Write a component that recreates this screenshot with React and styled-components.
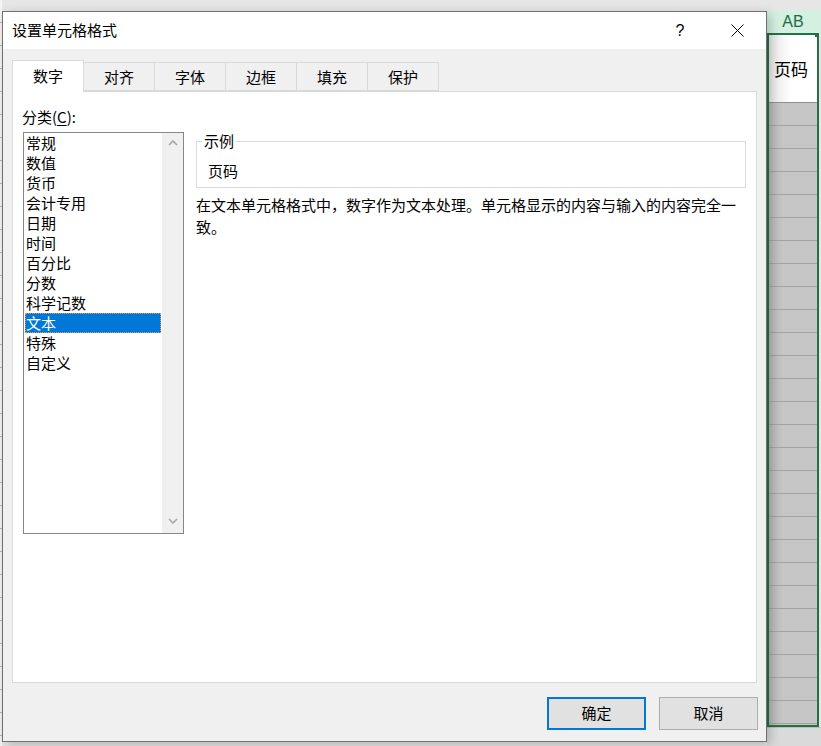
import React from 'react';
import styled, { createGlobalStyle } from 'styled-components';

const GlobalStyle = createGlobalStyle`
  html, body {
    margin: 0;
    padding: 0;
    background: #e6e6e6;
  }
  body {
    font-family: "Noto Sans CJK SC", "Noto Sans", sans-serif;
    color: #000;
  }
`;

const categories = [
  '常规', '数值', '货币', '会计专用', '日期', '时间',
  '百分比', '分数', '科学记数', '文本', '特殊', '自定义'
];

const tabs = ['数字', '对齐', '字体', '边框', '填充', '保护'];

// Page behind the dialog
const Screen = styled.div`
  display: flex;
  width: 821px;
  height: 746px;
  overflow: hidden;
  background: #e6e6e6;
`;

const LeftStrip = styled.div`
  width: 2px;
  flex: none;
  background: repeating-linear-gradient(to bottom, #f4f4f4 0 22px, #b8b8b8 22px 23px);
`;

// Dialog window
const Dialog = styled.div`
  position: relative;
  z-index: 1;
  flex: none;
  width: 765px;
  height: 731px;
  margin-top: 11px;
  box-sizing: border-box;
  border: 1px solid #707070;
  background: #f0f0f0;
  box-shadow: 3px 3px 10px rgba(0, 0, 0, 0.22);
  display: flex;
  flex-direction: column;
`;

const TitleBar = styled.div`
  height: 37px;
  flex: none;
  background: #fff;
  display: flex;
  align-items: center;
  padding-left: 9px;
  font-size: 15px;
`;

const Title = styled.div`
  flex: 1;
  padding-bottom: 2px;
`;

const TitleButton = styled.div`
  width: ${p => p.$w}px;
  height: 37px;
  display: flex;
  align-items: center;
  justify-content: center;
  font-family: "Liberation Sans", Arial, sans-serif;
  font-size: 16px;
`;

const Body = styled.div`
  flex: 1;
  display: flex;
  flex-direction: column;
  padding: 11px 8px 0 9px;
`;

const TabRow = styled.div`
  display: flex;
  align-items: flex-end;
  height: 31px;
`;

const Tab = styled.div`
  position: relative;
  box-sizing: border-box;
  width: 72px;
  height: ${p => (p.$active ? 32 : 29)}px;
  margin-right: -1px;
  margin-bottom: ${p => (p.$active ? -1 : 0)}px;
  z-index: ${p => (p.$active ? 2 : 0)};
  border: 1px solid #d9d9d9;
  border-bottom: ${p => (p.$active ? 'none' : '1px solid #d9d9d9')};
  background: ${p => (p.$active ? '#fff' : '#f0f0f0')};
  display: flex;
  align-items: center;
  justify-content: center;
  font-size: 15px;
  padding-bottom: ${p => (p.$active ? 3 : 1)}px;
`;

const Panel = styled.div`
  box-sizing: border-box;
  width: 745px;
  height: 592px;
  border: 1px solid #d9d9d9;
  background: #fff;
  display: flex;
  gap: 12px;
  padding: 15px 10px 0 10px;
`;

const LeftCol = styled.div`
  width: 161px;
  display: flex;
  flex-direction: column;
`;

const Label = styled.div`
  height: 20px;
  line-height: 20px;
  font-size: 15px;
  margin-bottom: 5px;
  margin-left: -1px;

  u {
    text-decoration-thickness: 1px;
    text-underline-offset: 2px;
  }
`;

const ListBox = styled.div`
  box-sizing: border-box;
  width: 161px;
  height: 402px;
  border: 1px solid #828790;
  display: flex;
`;

const Items = styled.div`
  flex: 1;
  padding: 0 1px;
`;

const Item = styled.div`
  box-sizing: border-box;
  height: 20px;
  line-height: 18px;
  font-size: 15px;
  padding-left: 0;
  border: 1px dotted ${p => (p.$selected ? '#e8a050' : 'transparent')};
  background: ${p => (p.$selected ? '#0078d7' : 'transparent')};
  color: ${p => (p.$selected ? '#fff' : '#000')};
  white-space: nowrap;
`;

const ScrollBar = styled.div`
  width: 21px;
  background: #f0f0f0;
  display: flex;
  flex-direction: column;
  justify-content: space-between;
  align-items: center;
  padding: 7px 0 9px;
`;

const RightCol = styled.div`
  width: 550px;
  padding-top: 24px;
`;

const Group = styled.fieldset`
  margin: 0;
  padding: 0;
  border: 1px solid #dcdcdc;
  min-width: 0;
`;

const Legend = styled.legend`
  font-size: 15px;
  line-height: 20px;
  padding: 0 2px;
  margin-left: 5px;
`;

const Sample = styled.div`
  font-size: 15px;
  line-height: 20px;
  padding: 10px 0 6px 11px;
`;

const Description = styled.p`
  margin: 6px 0 0;
  font-size: 15px;
  line-height: 22px;
`;

const Footer = styled.div`
  display: flex;
  justify-content: flex-end;
  gap: 13px;
  padding-top: 14px;
`;

const Button = styled.button`
  box-sizing: border-box;
  width: 99px;
  height: 33px;
  margin: 0;
  background: #e1e1e1;
  border: ${p => (p.$primary ? '2px solid #0078d7' : '1px solid #adadad')};
  font-family: "Noto Sans CJK SC", sans-serif;
  font-size: 15px;
  color: #000;
  padding: 0 0 2px;
`;

// Spreadsheet column visible beside the dialog
const SheetCol = styled.div`
  flex: 1;
  display: flex;
  flex-direction: column;
  padding-top: 10px;
`;

const ColHeader = styled.div`
  height: 23px;
  flex: none;
  background: #d3f0e0;
  color: #1d6b45;
  font-family: "Liberation Sans", Arial, sans-serif;
  font-size: 16px;
  display: flex;
  align-items: center;
  justify-content: center;
  padding-right: 2px;
`;

const Selection = styled.div`
  position: relative;
  width: 52px;
  height: 694px;
  box-sizing: border-box;
  border: 2px solid #217346;
  display: flex;
  flex-direction: column;
  overflow: hidden;
`;

const FillHandle = styled.div`
  position: absolute;
  top: -3px;
  right: -3px;
  width: 4px;
  height: 4px;
  background: #217346;
  border: 1px solid #fff;
`;

const ActiveCell = styled.div`
  height: 68px;
  flex: none;
  box-sizing: border-box;
  border-bottom: 1px solid #8e8e8e;
  background: linear-gradient(to right, #e4e4e4, #ffffff 22px);
  display: flex;
  align-items: center;
  padding-left: 5px;
  font-size: 17px;
  padding-bottom: 1px;
`;

const GreyRow = styled.div`
  height: 23px;
  flex: none;
  box-sizing: border-box;
  border-bottom: 1px solid #a2a2a2;
  background: linear-gradient(to right, #b4b4b4, #c6c6c6 14px);
`;

const SheetBottom = styled.div`
  flex: 1;
  background: #dadada;
  border-top: 1px solid #bdbdbd;
`;

const Chevron = ({ up }) => (
  <svg width="10" height="6" viewBox="0 0 10 6">
    <path
      d={up ? 'M1 5 L5 1 L9 5' : 'M1 1 L5 5 L9 1'}
      fill="none"
      stroke="#a6a6a6"
      strokeWidth="1.6"
    />
  </svg>
);

const CloseIcon = () => (
  <svg width="13" height="13" viewBox="0 0 13 13">
    <path d="M0.5 0.5 L12.5 12.5 M12.5 0.5 L0.5 12.5" stroke="#000" strokeWidth="1" />
  </svg>
);

export default function App() {
  return (
    <React.Fragment>
      <GlobalStyle />
      <Screen>
        <LeftStrip />
        <Dialog>
          <TitleBar>
            <Title>设置单元格格式</Title>
            <TitleButton $w={22}>?</TitleButton>
            <TitleButton $w={35} />
            <TitleButton $w={22}>
              <CloseIcon />
            </TitleButton>
            <TitleButton $w={18} />
          </TitleBar>
          <Body>
            <TabRow>
              {tabs.map((t, i) => (
                <Tab key={t} $active={i === 0}>{t}</Tab>
              ))}
            </TabRow>
            <Panel>
              <LeftCol>
                <Label>
                  分类(<u>C</u>):
                </Label>
                <ListBox>
                  <Items>
                    {categories.map(c => (
                      <Item key={c} $selected={c === '文本'}>{c}</Item>
                    ))}
                  </Items>
                  <ScrollBar>
                    <Chevron up />
                    <Chevron />
                  </ScrollBar>
                </ListBox>
              </LeftCol>
              <RightCol>
                <Group>
                  <Legend>示例</Legend>
                  <Sample>页码</Sample>
                </Group>
                <Description>
                  在文本单元格格式中，数字作为文本处理。单元格显示的内容与输入的内容完全一致。
                </Description>
              </RightCol>
            </Panel>
            <Footer>
              <Button $primary>确定</Button>
              <Button>取消</Button>
            </Footer>
          </Body>
        </Dialog>
        <SheetCol>
          <ColHeader>AB</ColHeader>
          <Selection>
            <FillHandle />
            <ActiveCell>页码</ActiveCell>
            {Array.from({ length: 28 }, (_, i) => (
              <GreyRow key={i} />
            ))}
          </Selection>
          <SheetBottom />
        </SheetCol>
      </Screen>
    </React.Fragment>
  );
}
